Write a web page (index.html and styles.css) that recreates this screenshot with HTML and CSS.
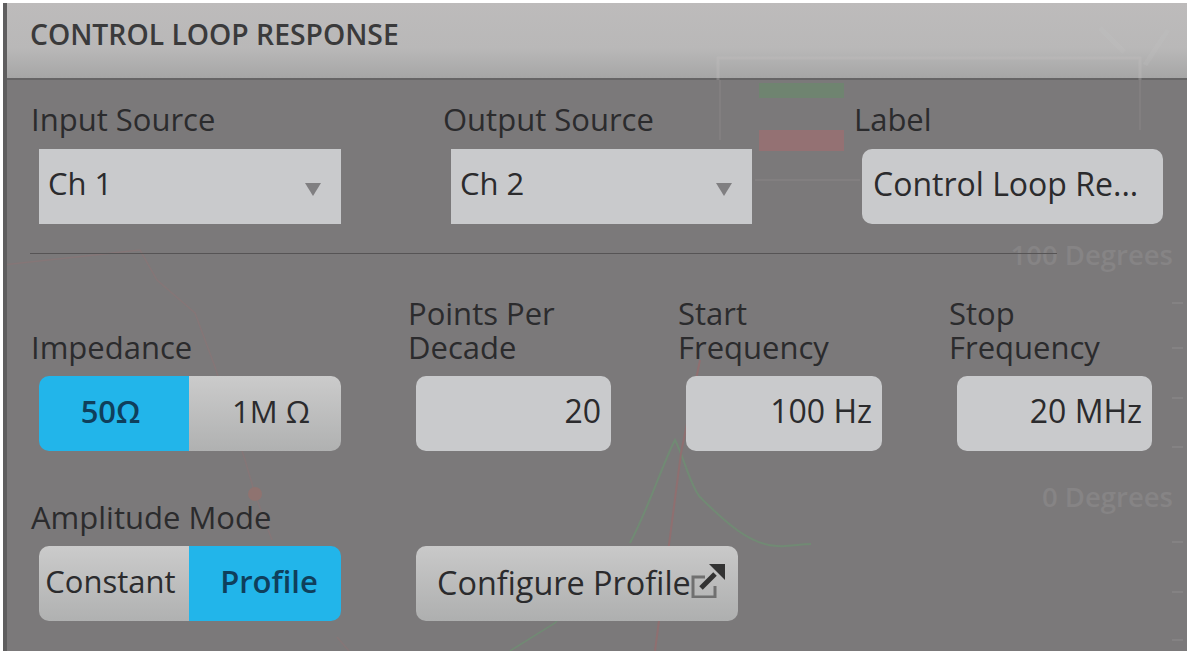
FILE: index.html
```html
<!DOCTYPE html>
<html lang="en">
<head>
    <meta charset="UTF-8">
    <title>Control Loop Response</title>
    <link rel="stylesheet" href="styles.css">
</head>
<body>

<div class="panel">
    <!-- Plot showing through the dimmed panel -->
    <svg class="plot" width="1191" height="651" viewBox="0 0 1191 651">
        <path d="M720 80V140M755 180H860M1140 80V130" fill="none" stroke="#827f80" stroke-width="2"/>
        <path d="M1172 303H1183M1172 348H1183M1172 398H1183M1172 447H1183M1172 542H1183M1172 592H1183M1172 640H1183" fill="none" stroke="#848283" stroke-width="2"/>
        <rect x="759" y="83" width="85" height="15" fill="#6f8470"/>
        <rect x="759" y="130" width="85" height="21" fill="#947173"/>
        <path d="M3 265L140 250L157 280L195 313L215 367L245 460L255 494L272 540" fill="none" stroke="#857677" stroke-width="1.5"/>
        <path d="M337 637L349 651" fill="none" stroke="#857677" stroke-width="1.5"/>
        <path d="M630 543C650 505 662 465 675 440C685 460 690 485 700 497C725 522 750 545 777 546C790 547 800 544 811 544" fill="none" stroke="#718a74" stroke-width="2"/>
        <path d="M510 651L555 623L625 548" fill="none" stroke="#718a74" stroke-width="1.5"/>
        <path d="M700 360L681 453L670 537L655 651" fill="none" stroke="#8f6f70" stroke-width="2"/>
        <circle cx="255" cy="494" r="7" fill="#8f7370"/>
        <text class="plot-text" x="1173" y="265" text-anchor="end">100 Degrees</text>
        <text class="plot-text" x="1173" y="507" text-anchor="end">0 Degrees</text>
    </svg>

    <div class="panel-header">CONTROL LOOP RESPONSE
        <svg class="header-ghost" width="1191" height="80" viewBox="0 0 1191 80">
            <path d="M718 80V58H1140V80" fill="none" stroke="#c2c1c1" stroke-width="3" opacity="0.3"/>
            <path d="M1100 28L1124 52M1168 30L1145 65" fill="none" stroke="#c4c3c3" stroke-width="5" opacity="0.2"/>
        </svg>
    </div>

    <div class="row row-source">
        <div class="field">
            <label>Input Source</label>
            <div class="select">Ch 1<span class="arrow"></span></div>
        </div>
        <div class="field">
            <label>Output Source</label>
            <div class="select">Ch 2<span class="arrow"></span></div>
        </div>
        <div class="field">
            <label>Label</label>
            <div class="input input-left">Control Loop Re...</div>
        </div>
    </div>

    <div class="divider"></div>

    <div class="row row-sweep">
        <div class="field">
            <label>Impedance</label>
            <div class="toggle">
                <button class="active shift-left">50Ω</button>
                <button class="ohm">1M Ω</button>
            </div>
        </div>
        <div class="field">
            <label>Points Per<br>Decade</label>
            <div class="input">20</div>
        </div>
        <div class="field">
            <label>Start<br>Frequency</label>
            <div class="input">100 Hz</div>
        </div>
        <div class="field">
            <label>Stop<br>Frequency</label>
            <div class="input">20 MHz</div>
        </div>
    </div>

    <div class="row row-mode">
        <div class="field">
            <label>Amplitude Mode</label>
            <div class="toggle">
                <button class="shift-left">Constant</button>
                <button class="active shift-right">Profile</button>
            </div>
        </div>
        <div class="field">
            <button class="configure">Configure Profile<svg class="popout" width="34" height="34" viewBox="0 0 34 34">
                <path d="M14 13H2V33H24V22" fill="none" stroke="#707070" stroke-width="3"/>
                <path d="M10 24L24 10" fill="none" stroke="#333" stroke-width="5"/>
                <path d="M18 0H34V16Z" fill="#333"/>
            </svg></button>
        </div>
    </div>
</div>

</body>
</html>
```

FILE: styles.css
```css
html, body {
    margin: 0;
    height: 100%;
    background-color: #fff;
    overflow: hidden;
}
body {
    padding-top: 3px;
    box-sizing: border-box;
    font-family: "Open Sans", sans-serif;
    color: #2b2b2d;
}
.panel {
    position: relative;
    width: 1184px;
    height: 648px;
    margin-left: 3px;
    background-color: #7b797a;
    border-left: 4px solid #5f5e5f;
    box-sizing: border-box;
    overflow: hidden;
}
.plot {
    position: absolute;
    left: -7px;
    top: -3px;
}
.plot-text {
    font-family: "Open Sans", sans-serif;
    font-size: 27.5px;
    font-weight: 600;
    fill: #868485;
}
.panel-header {
    position: relative;
    height: 77px;
    padding: 13px 0 0 23px;
    box-sizing: border-box;
    font-size: 28.3px;
    line-height: 36px;
    font-weight: 600;
    color: #3a3a3b;
    background: linear-gradient(#bdbbbb, #b9b8b8 60%, #a6a6a6);
    border-bottom: 2px solid #666566;
}
.header-ghost {
    position: absolute;
    left: -7px;
    top: -3px;
}
.row {
    position: relative;
    display: grid;
    align-items: end;
    padding-left: 25px;
}
.row-source {
    grid-template-columns: 309px 308px 308px;
    column-gap: 103px;
    margin-top: 22px;
}
.row-sweep {
    grid-template-columns: 309px 202px 203px 202px;
    column-gap: 68px;
    margin-top: 42px;
}
.row-mode {
    grid-template-columns: 309px 329px;
    column-gap: 68px;
    margin-top: 49px;
}
.field label {
    display: block;
    margin-left: -1px;
    font-size: 31px;
    line-height: 34px;
    margin-bottom: 12px;
    color: #2b2b2d;
    white-space: nowrap;
}
.row-source .field label {
    margin-bottom: 13px;
}
.select, .input, .toggle, .configure {
    height: 75px;
    margin-left: 7px;
    box-sizing: border-box;
    font-family: "Open Sans", sans-serif;
    font-size: 31px;
    color: #2b2b2d;
}
.select {
    position: relative;
    display: flex;
    align-items: center;
    padding: 0 0 7px 9px;
    background-color: #c9cacc;
}
.arrow {
    position: absolute;
    right: 20px;
    top: 34px;
    border-left: 8px solid transparent;
    border-right: 8px solid transparent;
    border-top: 13px solid #807f81;
}
.input {
    display: flex;
    align-items: center;
    justify-content: flex-end;
    padding: 0 10px 6px 0;
    font-size: 32px;
    background-color: #c9cacc;
    border-radius: 10px;
}
.input-left {
    justify-content: flex-start;
    padding-left: 11px;
    white-space: nowrap;
}
.toggle {
    display: grid;
    grid-template-columns: 150px 1fr;
    border-radius: 10px;
    overflow: hidden;
}
.toggle button {
    padding: 0 0 6px;
    border: none;
    font-family: inherit;
    font-size: 31px;
    color: #2b2b2d;
    background: linear-gradient(#cbcbcb, #b0b1b1);
}
.toggle button.active {
    background: #22b5ea;
    color: #0f3f5c;
    font-weight: 600;
}
.toggle button.ohm {
    padding-left: 12px;
}
.toggle button.shift-left {
    padding-right: 7px;
}
.toggle button.shift-right {
    padding-left: 8px;
}
.configure {
    display: flex;
    align-items: center;
    width: 322px;
    padding: 0 0 4px 21px;
    border: none;
    border-radius: 10px;
    font-size: 32.4px;
    background: linear-gradient(#c9c9c9, #aeafaf);
    white-space: nowrap;
}
.popout {
    margin: -2px 0 0 0;
}
.divider {
    position: relative;
    height: 1px;
    margin: 29px 0 0 23px;
    width: 1027px;
    background-color: #565455;
}
```
